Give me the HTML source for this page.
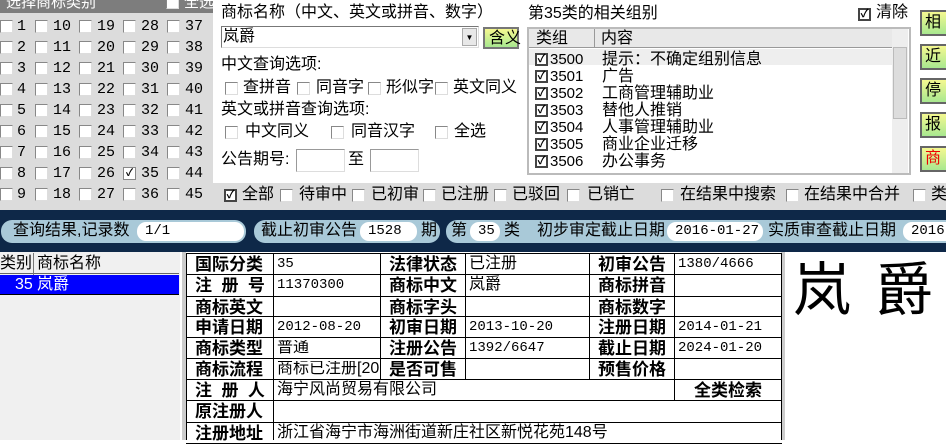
<!DOCTYPE html>
<html><head><meta charset="utf-8"><style>
*{margin:0;padding:0;box-sizing:border-box}
body{width:946px;height:440px;overflow:hidden;background:#fff;position:relative;font-family:"Liberation Sans","Noto Sans CJK SC","WenQuanYi Zen Hei",sans-serif;font-size:15px;color:#000}
.a{position:absolute;white-space:nowrap;line-height:1}
.cb{position:absolute;width:13px;height:13px;border:1px solid #888;background:#fff;border-right-color:#ddd;border-bottom-color:#ddd}
.ck{position:absolute;width:13px;height:13px;border:2px solid #444;background:#fff;font-size:11px;line-height:9px;text-align:center;font-weight:bold}
.num{font-family:"Liberation Mono",monospace;font-size:15px}
.pill{position:absolute;top:220px;height:23px;background:#a9c9d8;border-radius:11px}
.fld{position:absolute;top:222px;height:19px;background:#fff;border-radius:9px;font-size:14px;line-height:19px;font-family:"Liberation Mono","Noto Sans CJK SC",monospace;padding-left:8px}
.btn{position:absolute;left:920px;width:40px;height:26px;border:2px solid #666;background:linear-gradient(#f4f890,#a8e890);font-size:16px;line-height:22px;padding-left:3px}
.h{position:absolute;height:1px;background:#000}
.v{position:absolute;width:1px;background:#000}
.lb{position:absolute;font-weight:bold;font-size:17px;line-height:1;white-space:nowrap}
.vl{position:absolute;font-size:14px;line-height:1;white-space:nowrap;font-family:"Liberation Mono",monospace}
.vc{position:absolute;font-size:16px;line-height:1;white-space:nowrap}
</style></head><body>
<div class="a" style="left:0;top:0;width:213px;height:210px;background:#dcdcdc"></div>
<div class="a" style="left:0;top:0;width:213px;height:13px;background:#7d7d7d;overflow:hidden"><span style="position:absolute;left:6px;top:-5px;color:#fff;font-size:15px">选择商标类别</span><span style="position:absolute;left:184px;top:-5px;color:#fff;font-size:15px">全选</span></div>
<div class="cb" style="left:166px;top:-4px"></div>
<div id="grid"></div>
<div class="a" style="left:221px;top:5px;font-size:16px">商标名称（中文、英文或拼音、数字）</div>
<div class="a" style="left:221px;top:26px;width:258px;height:22px;border:1px solid #777;border-right-color:#ddd;border-bottom-color:#ddd;background:#fff"></div>
<div class="a" style="left:223px;top:29px;font-size:16px">岚爵</div>
<div class="a" style="left:462px;top:28px;width:15px;height:18px;background:#e8e8e8;border:1px solid #aaa;font-size:8px;text-align:center;line-height:18px">▼</div>
<div class="a" style="left:483px;top:27px;width:36px;height:22px;border:2px solid #777;background:linear-gradient(#f6f890,#a8e890);font-size:16px;padding:2px 0 0 4px">含义</div>
<div class="a" style="left:221px;top:57px;font-size:16px">中文查询选项:</div>
<div class="cb" style="left:225px;top:82px"></div><div class="a" style="left:243px;top:80px;font-size:16px">查拼音</div>
<div class="cb" style="left:297px;top:82px"></div><div class="a" style="left:316px;top:80px;font-size:16px">同音字</div>
<div class="cb" style="left:368px;top:82px"></div><div class="a" style="left:386px;top:80px;font-size:16px">形似字</div>
<div class="cb" style="left:435px;top:82px"></div><div class="a" style="left:453px;top:80px;font-size:16px">英文同义</div>
<div class="a" style="left:221px;top:102px;font-size:16px">英文或拼音查询选项:</div>
<div class="cb" style="left:225px;top:126px"></div><div class="a" style="left:245px;top:124px;font-size:16px">中文同义</div>
<div class="cb" style="left:331px;top:126px"></div><div class="a" style="left:351px;top:124px;font-size:16px">同音汉字</div>
<div class="cb" style="left:435px;top:126px"></div><div class="a" style="left:454px;top:124px;font-size:16px">全选</div>
<div class="a" style="left:221px;top:152px;font-size:16px">公告期号:</div>
<div class="a" style="left:296px;top:149px;width:49px;height:23px;border:1px solid #999;border-right-color:#ddd;border-bottom-color:#ddd"></div>
<div class="a" style="left:348px;top:152px;font-size:16px">至</div>
<div class="a" style="left:370px;top:149px;width:49px;height:23px;border:1px solid #999;border-right-color:#ddd;border-bottom-color:#ddd"></div>
<div class="a" style="left:213px;top:183px;width:733px;height:27px;background:#dcdcdc"></div>
<div class="ck" style="left:224px;top:189px">✓</div><div class="a" style="left:242px;top:187px;font-size:16px">全部</div>
<div class="cb" style="left:280px;top:189px"></div><div class="a" style="left:299px;top:187px;font-size:16px">待审中</div>
<div class="cb" style="left:352px;top:189px"></div><div class="a" style="left:371px;top:187px;font-size:16px">已初审</div>
<div class="cb" style="left:423px;top:189px"></div><div class="a" style="left:441px;top:187px;font-size:16px">已注册</div>
<div class="cb" style="left:494px;top:189px"></div><div class="a" style="left:512px;top:187px;font-size:16px">已驳回</div>
<div class="cb" style="left:567px;top:189px"></div><div class="a" style="left:587px;top:187px;font-size:16px">已销亡</div>
<div class="cb" style="left:661px;top:189px"></div><div class="a" style="left:680px;top:187px;font-size:16px">在结果中搜索</div>
<div class="cb" style="left:786px;top:189px"></div><div class="a" style="left:804px;top:187px;font-size:16px">在结果中合并</div>
<div class="cb" style="left:913px;top:189px"></div><div class="a" style="left:931px;top:187px;font-size:16px">类</div>
<div class="a" style="left:528px;top:6px;font-size:16px">第35类的相关组别</div>
<div class="ck" style="left:858px;top:8px">✓</div><div class="a" style="left:876px;top:5px;font-size:16px">清除</div>
<div class="a" style="left:527px;top:27px;width:384px;height:148px;border:2px solid #bbb;background:#fff"></div>
<div class="a" style="left:529px;top:29px;width:363px;height:19px;background:#e8e8e8;border-bottom:1px solid #999"></div>
<div class="v" style="left:594px;top:29px;height:19px;background:#999"></div>
<div class="a" style="left:536px;top:31px;font-size:16px">类组</div>
<div class="a" style="left:601px;top:31px;font-size:16px">内容</div>
<div class="a" style="left:529px;top:49px;width:363px;height:16px;background:#eee"></div>
<div class="a" style="left:892px;top:29px;width:16px;height:144px;background:#eee"></div>
<div class="a" style="left:893px;top:47px;width:14px;height:72px;background:#ddd;border:1px solid #bbb"></div>
<div id="grp"></div>
<div class="btn" style="top:10px">相</div>
<div class="btn" style="top:44px">近</div>
<div class="btn" style="top:78px">停</div>
<div class="btn" style="top:112px">报</div>
<div class="btn" style="top:146px;color:#e00">商</div>
<div class="a" style="left:0;top:210px;width:946px;height:42px;background:#0e2848"></div>
<div class="pill" style="left:1px;width:245px"></div><div class="a" style="left:13px;top:223px;font-size:16px">查询结果,记录数</div>
<div class="fld" style="left:137px;width:107px">1/1</div>
<div class="pill" style="left:254px;width:186px"></div><div class="a" style="left:261px;top:223px;font-size:16px">截止初审公告</div>
<div class="fld" style="left:360px;width:57px">1528</div><div class="a" style="left:421px;top:223px;font-size:16px">期</div>
<div class="pill" style="left:446px;width:520px"></div><div class="a" style="left:451px;top:223px;font-size:16px">第</div>
<div class="fld" style="left:470px;width:30px">35</div><div class="a" style="left:504px;top:223px;font-size:16px">类</div>
<div class="a" style="left:537px;top:223px;font-size:16px">初步审定截止日期</div>
<div class="fld" style="left:667px;width:96px">2016-01-27</div>
<div class="a" style="left:768px;top:223px;font-size:16px">实质审查截止日期</div>
<div class="fld" style="left:903px;width:60px">2016-</div>
<div class="a" style="left:0;top:252px;width:180px;height:188px;background:#f0f0f0"></div>
<div class="a" style="left:0;top:253px;width:179px;height:21px;border-bottom:1px solid #666"></div>
<div class="v" style="left:33px;top:253px;height:42px;background:#777"></div>
<div class="a" style="left:0;top:256px;font-size:16px">类别</div>
<div class="a" style="left:37px;top:256px;font-size:16px">商标名称</div>
<div class="a" style="left:0;top:275px;width:179px;height:20px;background:#0000ff;border-bottom:1px solid #000"></div>
<div class="a" style="left:15px;top:277px;font-size:16px;color:#fff">35</div>
<div class="a" style="left:37px;top:277px;font-size:16px;color:#fff">岚爵</div>
<div class="a" style="left:182px;top:252px;width:4px;height:188px;background:#ccc"></div>
<div class="a" style="left:781px;top:252px;width:4px;height:188px;background:#ccc"></div>
<div class="a" style="left:793px;top:262px;font-size:58px;font-weight:normal;letter-spacing:24px">岚爵</div>
<div id="tbl"></div>
<script>
var g='';
var cx=[0,35,79,123,167],nx=[17,53,97,141,185];
for(var c=0;c<5;c++)for(var r=0;r<9;r++){var n=c*9+r+1,y=20+r*21;
g+=(n==35?'<div class="ck" style="left:'+cx[c]+'px;top:'+y+'px;border:1px solid #888;font-size:10px;line-height:11px">✓</div>':'<div class="cb" style="left:'+cx[c]+'px;top:'+y+'px"></div>')+
'<div class="a num" style="left:'+nx[c]+'px;top:'+(y-1)+'px">'+n+'</div>';}
document.getElementById('grid').innerHTML=g;
var gs=[['3500','提示：不确定组别信息'],['3501','广告'],['3502','工商管理辅助业'],['3503','替他人推销'],['3504','人事管理辅助业'],['3505','商业企业迁移'],['3506','办公事务']];
g='';gs.forEach(function(x,i){var y=52+i*17;
g+='<div class="ck" style="left:535px;top:'+(y+1)+'px">✓</div><div class="a" style="left:550px;top:'+y+'px;font-size:15px">'+x[0]+'</div><div class="a" style="left:602px;top:'+y+'px;font-size:16px">'+x[1]+'</div>';});
document.getElementById('grp').innerHTML=g;
g='';
var ys=[253,274,296,316,337,358,379,400,422,443];
ys.forEach(function(y){g+='<div class="h" style="left:186px;top:'+y+'px;width:596px"></div>';});
g+='<div class="v" style="left:186px;top:253px;height:187px"></div>';
g+='<div class="v" style="left:273px;top:253px;height:187px"></div>';
g+='<div class="v" style="left:380px;top:253px;height:126px"></div>';
g+='<div class="v" style="left:465px;top:253px;height:126px"></div>';
g+='<div class="v" style="left:589px;top:253px;height:126px"></div>';
g+='<div class="v" style="left:674px;top:253px;height:147px"></div>';
g+='<div class="v" style="left:781px;top:253px;height:187px"></div>';
function val(s,x,y,w){if(/^[0-9\/\-]*$/.test(s))return '<div class="vl" style="left:'+x+'px;top:'+(y+1)+'px">'+s+'</div>';
return '<div class="vc" style="left:'+x+'px;top:'+y+'px;'+(w?'width:'+w+'px;overflow:hidden':'')+'">'+s+'</div>';}
var rows=[['国际分类','35','法律状态','已注册','初审公告','1380/4666'],['注&nbsp;&nbsp;册&nbsp;&nbsp;号','11370300','商标中文','岚爵','商标拼音',''],['商标英文','','商标字头','','商标数字',''],['申请日期','2012-08-20','初审日期','2013-10-20','注册日期','2014-01-21'],['商标类型','普通','注册公告','1392/6647','截止日期','2024-01-20'],['商标流程','商标已注册[20','是否可售','','预售价格','']];
rows.forEach(function(r,i){var y=ys[i]+3;
g+='<div class="lb" style="left:195px;top:'+y+'px">'+r[0]+'</div>'+val(r[1],277,y,102);
g+='<div class="lb" style="left:389px;top:'+y+'px">'+r[2]+'</div>'+val(r[3],469,y);
g+='<div class="lb" style="left:598px;top:'+y+'px">'+r[4]+'</div>'+val(r[5],678,y);});
g+='<div class="lb" style="left:195px;top:382px">注&nbsp;&nbsp;册&nbsp;&nbsp;人</div><div class="vc" style="left:277px;top:382px">海宁风尚贸易有限公司</div><div class="lb" style="left:694px;top:382px">全类检索</div>';
g+='<div class="lb" style="left:195px;top:403px">原注册人</div>';
g+='<div class="lb" style="left:195px;top:425px">注册地址</div><div class="vc" style="left:277px;top:425px">浙江省海宁市海洲街道新庄社区新悦花苑148号</div>';
document.getElementById('tbl').innerHTML=g;
</script>
</body></html>
